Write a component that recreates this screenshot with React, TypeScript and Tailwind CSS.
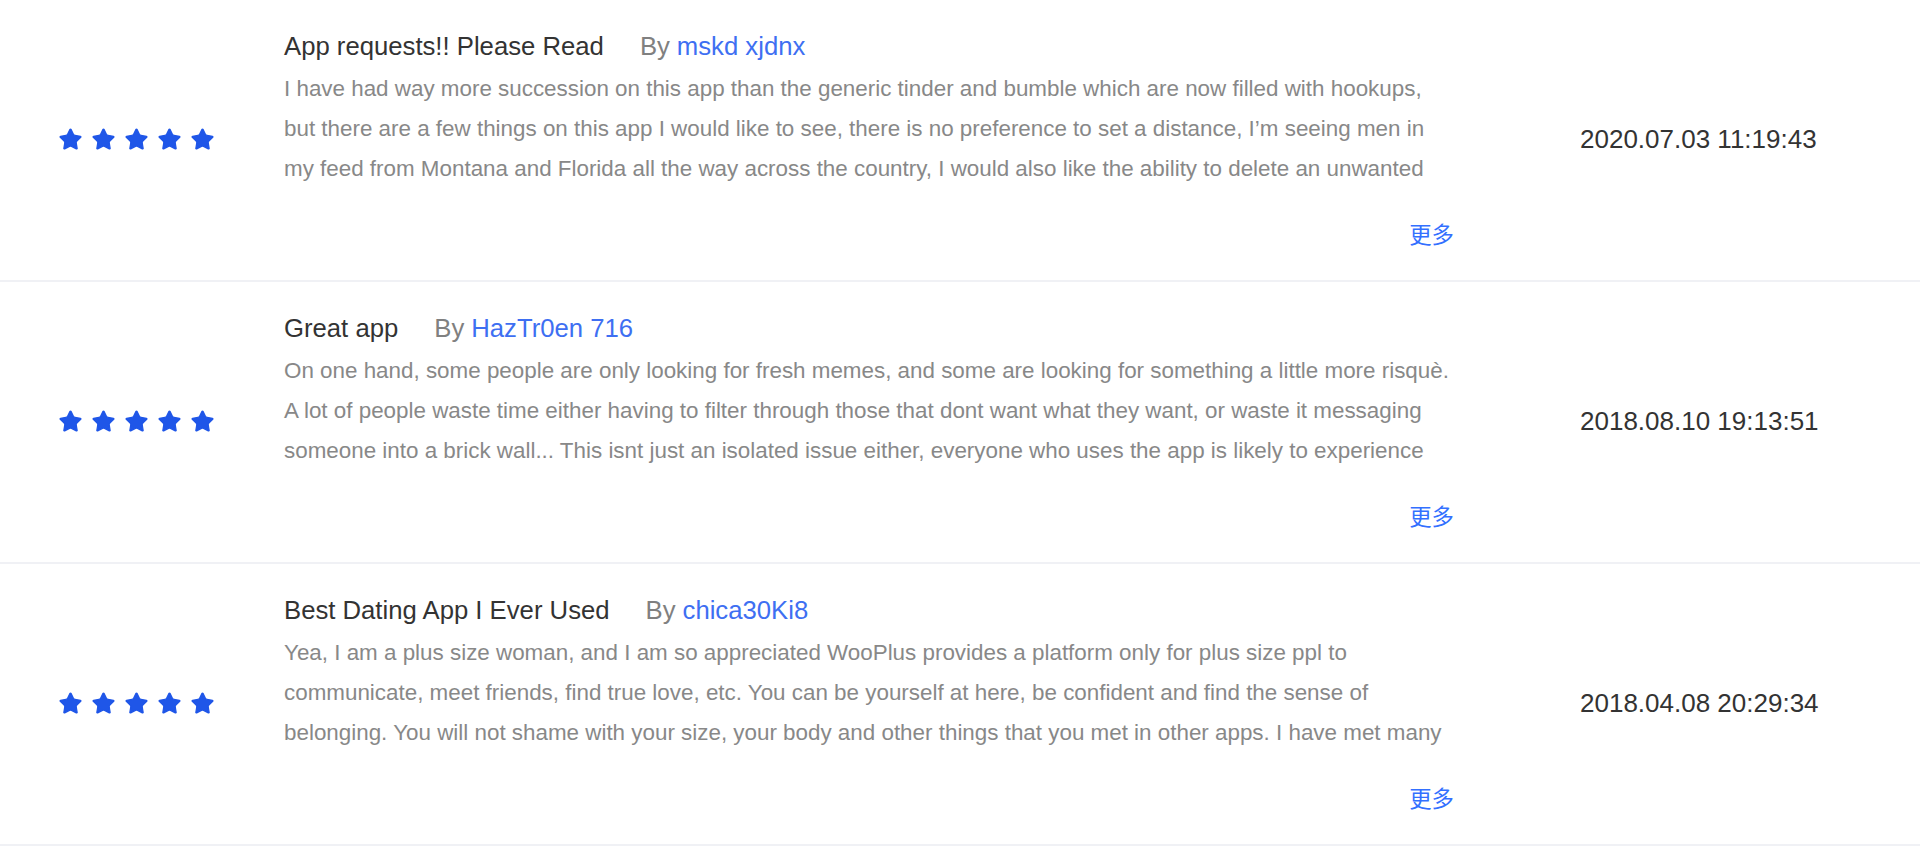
import { Star } from 'lucide-react'

type Review = {
  title: string
  author: string
  lines: string[]
  date: string
  rating: number
}

const reviews: Review[] = [
  {
    title: 'App requests!! Please Read',
    author: 'mskd xjdnx',
    lines: [
      'I have had way more succession on this app than the generic tinder and bumble which are now filled with hookups,',
      'but there are a few things on this app I would like to see, there is no preference to set a distance, I’m seeing men in',
      'my feed from Montana and Florida all the way across the country, I would also like the ability to delete an unwanted',
    ],
    date: '2020.07.03 11:19:43',
    rating: 5,
  },
  {
    title: 'Great app',
    author: 'HazTr0en 716',
    lines: [
      'On one hand, some people are only looking for fresh memes, and some are looking for something a little more risquè.',
      'A lot of people waste time either having to filter through those that dont want what they want, or waste it messaging',
      'someone into a brick wall... This isnt just an isolated issue either, everyone who uses the app is likely to experience',
    ],
    date: '2018.08.10 19:13:51',
    rating: 5,
  },
  {
    title: 'Best Dating App I Ever Used',
    author: 'chica30Ki8',
    lines: [
      'Yea, I am a plus size woman, and I am so appreciated WooPlus provides a platform only for plus size ppl to',
      'communicate, meet friends, find true love, etc. You can be yourself at here, be confident and find the sense of',
      'belonging. You will not shame with your size, your body and other things that you met in other apps. I have met many',
    ],
    date: '2018.04.08 20:29:34',
    rating: 5,
  },
]

function Stars({ count }: { count: number }) {
  return (
    <div className="flex items-center gap-[8px]">
      {Array.from({ length: count }).map((_, i) => (
        <Star key={i} size={25} strokeWidth={1.2} className="text-[#1f56e8] fill-[#1f56e8]" />
      ))}
    </div>
  )
}

function ReviewRow({ review }: { review: Review }) {
  return (
    <div className="flex items-center border-b-2 border-[#f0f1f5] pt-[26px] pb-[27px]">
      <div className="w-[284px] shrink-0 pl-[58px]">
        <Stars count={review.rating} />
      </div>

      <div className="w-[1170px] shrink-0 flex flex-col">
        <div className="flex items-center leading-[40px] text-[25.7px]">
          <span className="text-[#333333]">{review.title}</span>
          <span className="ml-[36px] text-[#808080]">By</span>
          <span className="ml-[7px] text-[#3e6ff2]">{review.author}</span>
        </div>
        <div className="mt-[3px] text-[22.4px] leading-[40px] text-[#888888]">
          {review.lines.map((line, i) => (
            <div key={i} className="whitespace-nowrap">{line}</div>
          ))}
        </div>
        <div className="mt-[24px] flex justify-end leading-[40px]">
          <button className="text-[22.4px] text-[#3370ff]" style={{ fontFamily: '"Noto Sans CJK SC", sans-serif' }}>
            更多
          </button>
        </div>
      </div>

      <div className="ml-[126px] text-[26px] text-[#333333] whitespace-nowrap">{review.date}</div>
    </div>
  )
}

export default function App() {
  return (
    <div className="w-[1920px] h-[846px] overflow-hidden bg-white" style={{ fontFamily: '"Liberation Sans", Arial, sans-serif' }}>
      {reviews.map((r, i) => (
        <ReviewRow key={i} review={r} />
      ))}
    </div>
  )
}
